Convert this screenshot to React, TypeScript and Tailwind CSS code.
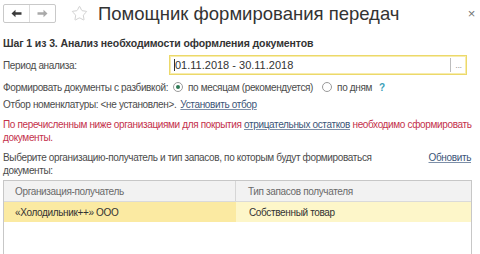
import { Star } from "lucide-react";

function NavButtons() {
  return (
    <div className="flex h-[19px] w-[53px] shrink-0 rounded-[2px] border border-[#c9c9c9] bg-white">
      <button className="flex w-[26px] items-center justify-center border-r border-[#dcdcdc]">
        <svg width="11" height="9" viewBox="0 0 11 9">
          <path d="M0.5 4.5 L4.5 0.8 L4.5 3.3 L10.5 3.3 L10.5 5.7 L4.5 5.7 L4.5 8.2 Z" fill="#3a3a3a" />
        </svg>
      </button>
      <button className="flex flex-1 items-center justify-center">
        <svg width="11" height="9" viewBox="0 0 11 9">
          <path d="M10.5 4.5 L6.5 0.8 L6.5 3.3 L0.5 3.3 L0.5 5.7 L6.5 5.7 L6.5 8.2 Z" fill="#a9a9a9" />
        </svg>
      </button>
    </div>
  );
}

function Radio({ checked }: { checked?: boolean }) {
  return (
    <span className="flex h-[10px] w-[10px] shrink-0 items-center justify-center rounded-full border border-[#9a9a9a] bg-white">
      {checked && <span className="h-[4px] w-[4px] rounded-full bg-[#2f7a55]" />}
    </span>
  );
}

export default function App() {
  return (
    <div
      className="h-[254px] w-[480px] overflow-hidden bg-white text-[10px] tracking-[-0.35px] text-[#4b4b4b]"
      style={{ fontFamily: '"Liberation Sans", Arial, sans-serif' }}
    >
      {/* Title bar */}
      <div className="flex h-[30px] items-start pl-[3px] pr-[5px] pt-[4px]">
        <NavButtons />
        <Star className="ml-[15px] mt-[1px] h-[17px] w-[17px] shrink-0 text-[#c4c4c4]" strokeWidth={1.1} />
        <h1 className="ml-[10px] mt-[-1px] text-[18.5px] leading-[22px] tracking-normal text-[#333]">
          Помощник формирования передач
        </h1>
        <span className="ml-auto mt-[3px] text-[13px] leading-[13px] text-[#777]">×</span>
      </div>

      <div className="px-[3px]">
        {/* Step */}
        <div className="mt-[6px] flex h-[16px] items-center text-[10.5px] font-bold tracking-[-0.1px] text-[#333]">
          Шаг 1 из 3. Анализ необходимости оформления документов
        </div>

        {/* Period */}
        <div className="mt-[3px] flex h-[20px] items-center">
          <span className="w-[166px] shrink-0">Период анализа:</span>
          <div className="flex h-[20px] w-[298px] items-center border border-[#ecd96a] bg-white shadow-[inset_0_0_0_1px_#f7ecae]">
            <span className="flex-1 pl-[4px] text-[11px] tracking-normal text-[#333]">
              <span className="border-l border-[#333]">01.11.2018 - 30.11.2018</span>
            </span>
            <span className="flex h-[14px] w-[16px] items-center justify-center border-l border-[#bdbdbd] text-[9px] leading-[9px] text-[#999]">
              ...
            </span>
          </div>
        </div>

        {/* Split radio */}
        <div className="mt-[3px] flex h-[18px] items-center">
          <span className="w-[170px] shrink-0">Формировать документы с разбивкой:</span>
          <Radio checked />
          <span className="ml-[5px]">по месяцам (рекомендуется)</span>
          <span className="ml-[9px]">
            <Radio />
          </span>
          <span className="ml-[5px]">по дням</span>
          <span className="ml-[7px] font-bold text-[#3aa0b8]">?</span>
        </div>

        {/* Filter */}
        <div className="flex h-[16px] items-center">
          Отбор номенклатуры: &lt;не установлен&gt;.
          <a href="#" className="ml-[4px] text-[#3c5578] underline decoration-[#7d8fa8]">
            Установить отбор
          </a>
        </div>

        {/* Warning */}
        <p className="mt-[6px] leading-[13px] text-[#c4314b]">
          По перечисленным ниже организациями для покрытия{" "}
          <a href="#" className="text-[#3c5578] underline decoration-[#7d8fa8]">
            отрицательных остатков
          </a>{" "}
          необходимо сформировать
          <br />
          документы.
        </p>

        {/* Choose */}
        <div className="mt-[7px] flex items-start">
          <p className="leading-[13px]">
            Выберите организацию-получатель и тип запасов, по которым будут формироваться
            <br />
            документы:
          </p>
          <a href="#" className="ml-auto mr-[6px] leading-[13px] text-[#3c5578] underline decoration-[#7d8fa8]">
            Обновить
          </a>
        </div>

        {/* Table */}
        <div className="mt-[3px] h-[80px] w-[469px] border border-[#c7c7c7] bg-white">
          <div className="flex h-[21px] items-center border-b border-[#dadada] bg-[#f2f2f2] text-[#6a6a6a]">
            <div className="flex h-full w-[232px] items-center border-r border-[#d6d6d6] pl-[11px]">
              Организация-получатель
            </div>
            <div className="pl-[12px]">Тип запасов получателя</div>
          </div>
          <div className="flex h-[20px] text-[#333]">
            <div className="flex w-[232px] items-center bg-[#fbeaa2] pl-[11px]">«Холодильник++» ООО</div>
            <div className="flex flex-1 items-center bg-[#fdf6c9] pl-[13px]">Собственный товар</div>
          </div>
        </div>
      </div>
    </div>
  );
}
